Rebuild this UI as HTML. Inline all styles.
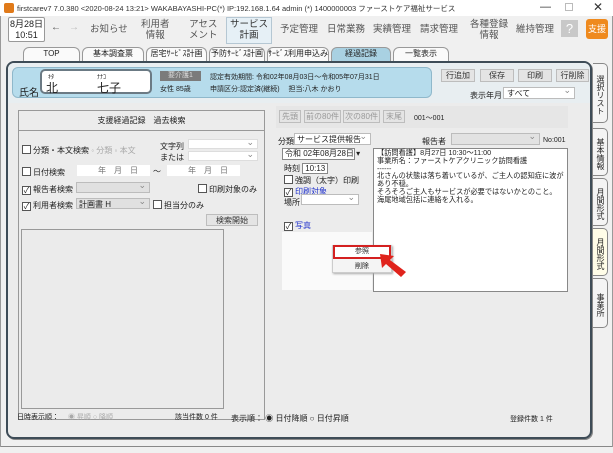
<!DOCTYPE html>
<html><head><meta charset="utf-8"><style>
*{box-sizing:border-box;margin:0;padding:0}
body{width:613px;height:453px;overflow:hidden;background:#f0f0f0;font-family:"Liberation Sans","Noto Sans CJK JP",sans-serif;font-size:8px;color:#222;position:relative}
.a{position:absolute;white-space:nowrap}
.btn{position:absolute;background:#e4e4e4;border:1px solid #bdbdbd;text-align:center;font-size:8px;color:#333}
.sel{position:absolute;background:#fff;border:1px solid #bcbcbc;font-size:8px}
.sel:after{content:"⌄";position:absolute;right:3px;top:-3px;color:#888;font-size:9px}
.cb{display:inline-block;width:9px;height:9px;border:1px solid #555;background:#fff;vertical-align:-1px;margin-right:2px;font-size:8px;line-height:7px;text-align:center}
.tab{position:absolute;top:47px;height:14px;border:1px solid #999;border-bottom:none;border-radius:6px 6px 0 0;background:#fafafa;font-size:8px;text-align:center;line-height:12px}
.rt{position:absolute;left:593px;width:15px;border:1px solid #888;border-left:none;border-radius:0 5px 5px 0;background:#f4f4f4;writing-mode:vertical-rl;font-size:8px;line-height:13px;text-align:center;padding-top:4px}
.nav{position:absolute;top:19px;font-size:9.5px;color:#555;text-align:center;line-height:11px}
.tx div{height:7.8px;line-height:7.8px;overflow:visible}
</style></head><body>
<div class="a" style="left:0;top:0;width:613px;height:16px;background:#fff"></div>
<div class="a" style="left:4px;top:3px;width:10px;height:10px;background:#e07a1a;border-radius:2px"></div>
<div class="a" style="left:17px;top:3px;font-size:7.5px;color:#333">firstcarev7 7.0.380 &lt;2020-08-24 13:21&gt; WAKABAYASHI-PC(*) IP:192.168.1.64 admin (*) 1400000003 ファーストケア福祉サービス</div>
<div class="a" style="left:540px;top:1px;font-size:11px;color:#333">—</div>
<div class="a" style="left:565px;top:3px;width:8px;height:8px;border:1px solid #bbb"></div>
<div class="a" style="left:593px;top:0px;font-size:12px;color:#333">✕</div>
<div class="a" style="left:8px;top:17px;width:37px;height:25px;border:1px solid #999;background:#fff;border-radius:2px;font-size:9px;line-height:11px;text-align:center;padding-top:1px">8月28日<br>10:51</div>
<div class="a" style="left:51px;top:22px;font-size:10px;color:#555">←</div>
<div class="a" style="left:69px;top:22px;font-size:10px;color:#bbb">→</div>
<div class="nav" style="left:90px;top:24px">お知らせ</div>
<div class="nav" style="left:141px">利用者<br>情報</div>
<div class="nav" style="left:189px">アセス<br>メント</div>
<div class="a" style="left:226px;top:17px;width:46px;height:27px;background:#e6f0f6;border:1px solid #b5c7d3"></div>
<div class="nav" style="left:230px;color:#333">サービス<br>計画</div>
<div class="nav" style="left:280px;top:24px">予定管理</div>
<div class="nav" style="left:327px;top:24px">日常業務</div>
<div class="nav" style="left:373px;top:24px">実績管理</div>
<div class="nav" style="left:420px;top:24px">請求管理</div>
<div class="nav" style="left:470px">各種登録<br>情報</div>
<div class="nav" style="left:516px;top:24px">維持管理</div>
<div class="a" style="left:561px;top:20px;width:17px;height:17px;background:#c8c8c8;color:#fff;font-size:13px;text-align:center;line-height:17px">?</div>
<div class="a" style="left:586px;top:19px;width:22px;height:20px;background:#ef8a1e;border-radius:3px;color:#fff;font-size:9px;text-align:center;line-height:20px">支援</div>
<div class="tab" style="left:23px;width:57px">TOP</div>
<div class="tab" style="left:82px;width:62px">基本調査票</div>
<div class="tab" style="left:146px;width:61px">居宅ｻｰﾋﾞｽ計画</div>
<div class="tab" style="left:209px;width:56px">予防ｻｰﾋﾞｽ計画</div>
<div class="tab" style="left:267px;width:62px">ｻｰﾋﾞｽ利用申込み</div>
<div class="tab" style="left:331px;width:60px;background:#a9d1e2">経過記録</div>
<div class="tab" style="left:393px;width:56px">一覧表示</div>
<div class="a" style="left:6px;top:61px;width:586px;height:378px;border:2px solid #3e4c57;border-radius:8px;background:#ececec;box-shadow:1px 1px 0 #888"></div>
<div class="a" style="left:8px;top:63px;width:582px;height:40px;background:#e8eef1;border-radius:6px 6px 0 0"></div>
<div class="a" style="left:12px;top:67px;width:420px;height:31px;background:#b6dcec;border-radius:6px;border:1px solid #8fb8cb"></div>
<div class="a" style="left:19px;top:84px;font-size:10px">氏名</div>
<div class="a" style="left:40px;top:69px;width:112px;height:25px;background:#fff;border:2px solid #6b7a84;border-radius:5px"></div>
<div class="a" style="left:48px;top:72px;font-size:6px">ｷﾀ</div><div class="a" style="left:97px;top:72px;font-size:6px">ﾅﾅｺ</div>
<div class="a" style="left:46px;top:79px;font-size:12px">北</div><div class="a" style="left:97px;top:79px;font-size:12px">七子</div>
<div class="a" style="left:160px;top:71px;width:41px;height:10px;background:#7b7b7b;color:#ddd;font-size:7px;text-align:center;line-height:10px">要介護1</div>
<div class="a" style="left:160px;top:84px;font-size:7px">女性 85歳</div>
<div class="a" style="left:210px;top:72px;font-size:7px">認定有効期間: 令和02年08月03日～令和05年07月31日</div>
<div class="a" style="left:210px;top:84px;font-size:7px">申請区分:認定済(継続)　 担当:八木 かおり</div>
<div class="btn" style="left:441px;top:69px;width:34px;height:13px">行追加</div>
<div class="btn" style="left:480px;top:69px;width:34px;height:13px">保存</div>
<div class="btn" style="left:518px;top:69px;width:34px;height:13px">印刷</div>
<div class="btn" style="left:556px;top:69px;width:33px;height:13px">行削除</div>
<div class="a" style="left:470px;top:90px;font-size:8px">表示年月</div>
<div class="sel" style="left:503px;top:87px;width:72px;height:12px;padding-left:3px">すべて</div>
<div class="rt" style="top:63px;height:60px">選択リスト</div>
<div class="rt" style="top:128px;height:48px">基本情報</div>
<div class="rt" style="top:178px;height:48px">月間形式</div>
<div class="rt" style="top:228px;height:48px;background:#fffde8">月間形式</div>
<div class="rt" style="top:278px;height:50px">事業所</div>
<div class="a" style="left:18px;top:110px;width:247px;height:310px;border:1px solid #999;background:#ececec"></div>
<div class="a" style="left:18px;top:110px;width:247px;height:21px;border-bottom:1px solid #999;text-align:center;line-height:21px;font-size:8px">支援経過記録　過去検索</div>
<div class="a" style="left:22px;top:145px"><span class="cb"></span>分類・本文検索 <span style="color:#aaa">◦ 分類 ◦ 本文</span></div>
<div class="a" style="left:160px;top:141px">文字列</div><div class="a" style="left:160px;top:152px">または</div>
<div class="sel" style="left:188px;top:139px;width:70px;height:10px;border-color:#ddd"></div>
<div class="sel" style="left:188px;top:151px;width:70px;height:10px;border-color:#ddd"></div>
<div class="a" style="left:22px;top:167px"><span class="cb"></span>日付検索</div>
<div class="a" style="left:77px;top:165px;width:73px;height:11px;background:#fff;text-align:right;padding-right:12px;color:#777">年　月　日</div>
<div class="a" style="left:153px;top:166px">～</div>
<div class="a" style="left:167px;top:165px;width:73px;height:11px;background:#fff;text-align:right;padding-right:12px;color:#777">年　月　日</div>
<div class="a" style="left:22px;top:184px"><span class="cb">✓</span>報告者検索</div>
<div class="sel" style="left:76px;top:182px;width:74px;height:11px;background:#e0e0e0"></div>
<div class="a" style="left:198px;top:184px"><span class="cb"></span>印刷対象のみ</div>
<div class="a" style="left:22px;top:200px"><span class="cb">✓</span>利用者検索</div>
<div class="sel" style="left:76px;top:198px;width:74px;height:11px;background:#e0e0e0;padding-left:2px">計画書 H</div>
<div class="a" style="left:153px;top:200px"><span class="cb"></span>担当分のみ</div>
<div class="btn" style="left:206px;top:214px;width:52px;height:12px">検索開始</div>
<div class="a" style="left:21px;top:229px;width:203px;height:180px;border:1px solid #999;background:#ebebeb"></div>
<div class="a" style="left:17px;top:412px;font-size:7px">日時表示順：　 <span style="color:#aaa">◉ 昇順 ○ 降順</span></div>
<div class="a" style="left:175px;top:412px;font-size:7px">該当件数 0 件</div>
<div class="a" style="left:231px;top:413px;font-size:8px">表示順： ◉ 日付降順 ○ 日付昇順</div>
<div class="a" style="left:510px;top:414px;font-size:7px">登録件数 1 件</div>
<div class="a" style="left:276px;top:106px;width:292px;height:22px;background:#e6e6e6"></div>
<div class="btn" style="left:279px;top:110px;width:22px;height:13px;color:#999">先頭</div>
<div class="btn" style="left:304px;top:110px;width:37px;height:13px;color:#999">前の80件</div>
<div class="btn" style="left:343px;top:110px;width:37px;height:13px;color:#999">次の80件</div>
<div class="btn" style="left:383px;top:110px;width:22px;height:13px;color:#999">末尾</div>
<div class="a" style="left:414px;top:113px;font-size:7px">001～001</div>
<div class="a" style="left:278px;top:136px">分類</div>
<div class="sel" style="left:294px;top:133px;width:77px;height:12px;padding-left:2px">サービス提供報告</div>
<div class="a" style="left:422px;top:136px">報告者</div>
<div class="sel" style="left:451px;top:133px;width:89px;height:12px;background:#e2e2e2"></div>
<div class="a" style="left:543px;top:137px;font-size:7px">No:001</div>
<div class="a" style="left:282px;top:148px;width:73px;height:12px;background:#fff;border:1px solid #888;padding-left:2px;line-height:10px">令和 02年08月28日 ▾</div>
<div class="a" style="left:284px;top:163px">時刻 <span style="border:1px solid #888;background:#fff;padding:0 2px">10:13</span></div>
<div class="a" style="left:284px;top:175px"><span class="cb"></span>強調（太字）印刷</div>
<div class="a" style="left:284px;top:186px;color:#2233cc"><span class="cb" style="color:#222">✓</span>印刷対象</div>
<div class="a" style="left:284px;top:197px">場所</div>
<div class="sel" style="left:301px;top:194px;width:58px;height:11px"></div>
<div class="a" style="left:284px;top:220px;color:#2233cc"><span class="cb" style="color:#222">✓</span>写真</div>
<div class="a" style="left:282px;top:232px;width:90px;height:58px;background:#fafafa"></div>
<div class="a" style="left:373px;top:148px;width:195px;height:144px;background:#fff;border:1px solid #888"></div>
<div class="a tx" style="left:377px;top:149px;font-size:7.2px;color:#222"><div>【訪問看護】8月27日 10:30～11:00</div><div>事業所名：ファーストケアクリニック訪問看護</div><div>------</div><div>北さんの状態は落ち着いているが、ご主人の認知症に波が</div><div>あり不穏。</div><div>そろそろご主人もサービスが必要ではないかとのこと。</div><div>海尾地域包括に連絡を入れる。</div></div>
<div class="a" style="left:332px;top:245px;width:60px;height:28px;background:#f4f4f4;border:1px solid #ccc;box-shadow:1px 1px 2px #aaa"></div>
<div class="a" style="left:333px;top:245px;width:58px;height:14px;border:2px solid #d42020;background:#fff;text-align:center;font-size:7px;line-height:10px">参照</div>
<div class="a" style="left:333px;top:261px;width:58px;text-align:center;font-size:7px">削除</div>
<svg class="a" style="left:378px;top:252px" width="32" height="26" viewBox="0 0 32 26"><path d="M2 2 L16 4 L12 8 L28 20 L23 25 L8 12 L4 16 Z" fill="#e0231c"/></svg>
<div class="a" style="left:0;top:446px;width:613px;height:1px;background:#888"></div>
<div class="a" style="left:0;top:16px;width:1px;height:431px;background:#999"></div>
<div class="a" style="left:612px;top:16px;width:1px;height:431px;background:#999"></div>
</body></html>
